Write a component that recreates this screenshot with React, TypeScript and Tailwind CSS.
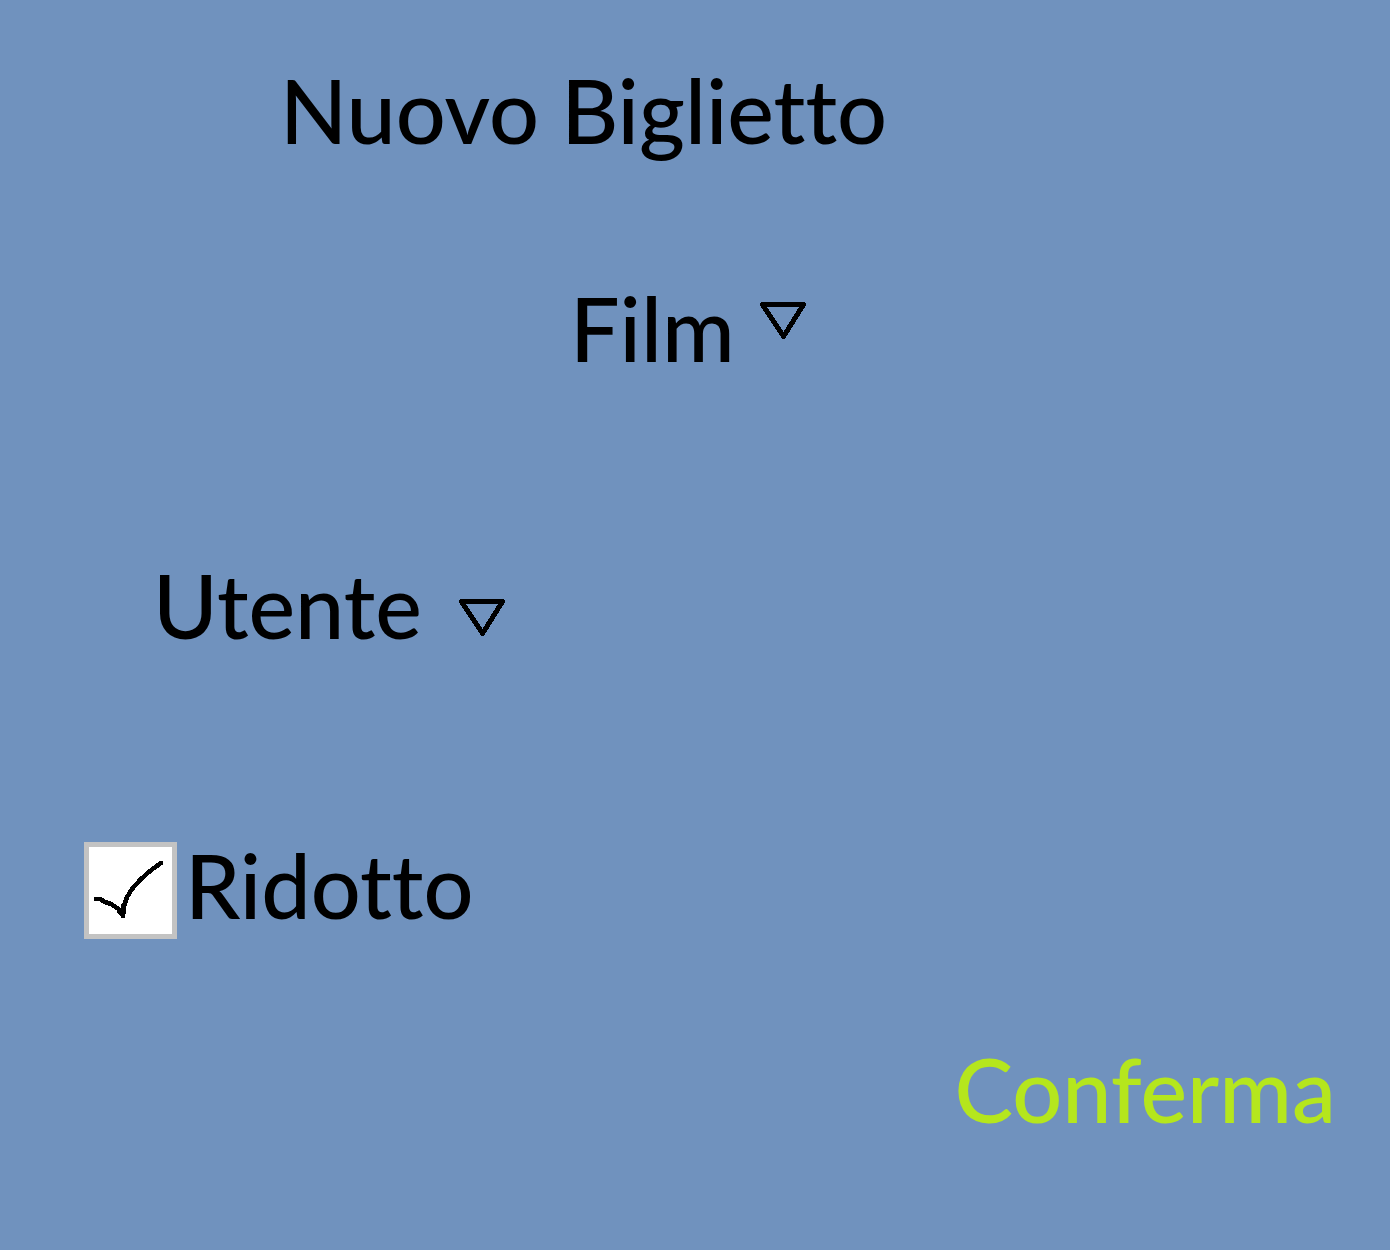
import { useState, type ReactNode } from "react";

function Triangle() {
  return (
    <svg
      aria-hidden="true"
      viewBox="0 0 48 40"
      className="h-10 w-12"
      fill="none"
      stroke="black"
      strokeWidth="5"
      strokeLinecap="round"
      strokeLinejoin="round"
      shapeRendering="crispEdges"
    >
      <path d="M3.5 4.5H44.5L24.5 36.5Z" />
    </svg>
  );
}

function Dropdown({ name, children }: { name: string; children: ReactNode }) {
  return (
    <div className="flex">
      <select
        aria-label={name}
        className="h-24 cursor-pointer appearance-none bg-transparent leading-24 text-black"
      >
        <option>{name}</option>
      </select>
      {children}
    </div>
  );
}

export default function App() {
  const [reduced, setReduced] = useState(true);

  return (
    <form
      className="flex min-h-screen flex-col bg-[#7092be] pt-[62px] font-[Lato,sans-serif] text-[88px] leading-24 font-medium text-black [font-variant-ligatures:none]"
      onSubmit={(e) => e.preventDefault()}
    >
      <h1 className="pl-70">Nuovo Biglietto</h1>

      <div className="mt-[122px] pl-[570px]">
        <Dropdown name="Film">
          <span className="pointer-events-none ml-6 pt-5">
            <Triangle />
          </span>
        </Dropdown>
      </div>

      <div className="mt-[181px] pl-[153px]">
        <Dropdown name="Utente">
          <span className="pointer-events-none ml-9 pt-10">
            <Triangle />
          </span>
        </Dropdown>
      </div>

      <div className="mt-[184px] flex items-start pl-21">
        <span className="mt-[5px] grid">
          <input
            id="ridotto"
            type="checkbox"
            checked={reduced}
            onChange={(e) => setReduced(e.target.checked)}
            className="col-start-1 row-start-1 h-[97px] w-[93px] appearance-none border-5 border-[#c3c3c3] bg-white"
          />
          {reduced && (
            <svg
              aria-hidden="true"
              viewBox="0 0 93 97"
              className="pointer-events-none col-start-1 row-start-1 h-[97px] w-[93px]"
              fill="none"
              stroke="black"
              strokeWidth="4.5"
              strokeLinecap="round"
              strokeLinejoin="round"
              shapeRendering="crispEdges"
            >
              <path d="M12 57L16 57L21 60L27 62L33 66L39 70L39 74L40 64L43 55L48 47L56 38L66 29L77 21" />
              <path d="M35 69L39 73L39 64" />
            </svg>
          )}
        </span>
        <label htmlFor="ridotto" className="pl-2">
          Ridotto
        </label>
      </div>

      <div className="mt-[102px] flex justify-end pr-[54px]">
        <button type="submit" className="cursor-pointer text-[#b5e61d]">
          Conferma
        </button>
      </div>
    </form>
  );
}
